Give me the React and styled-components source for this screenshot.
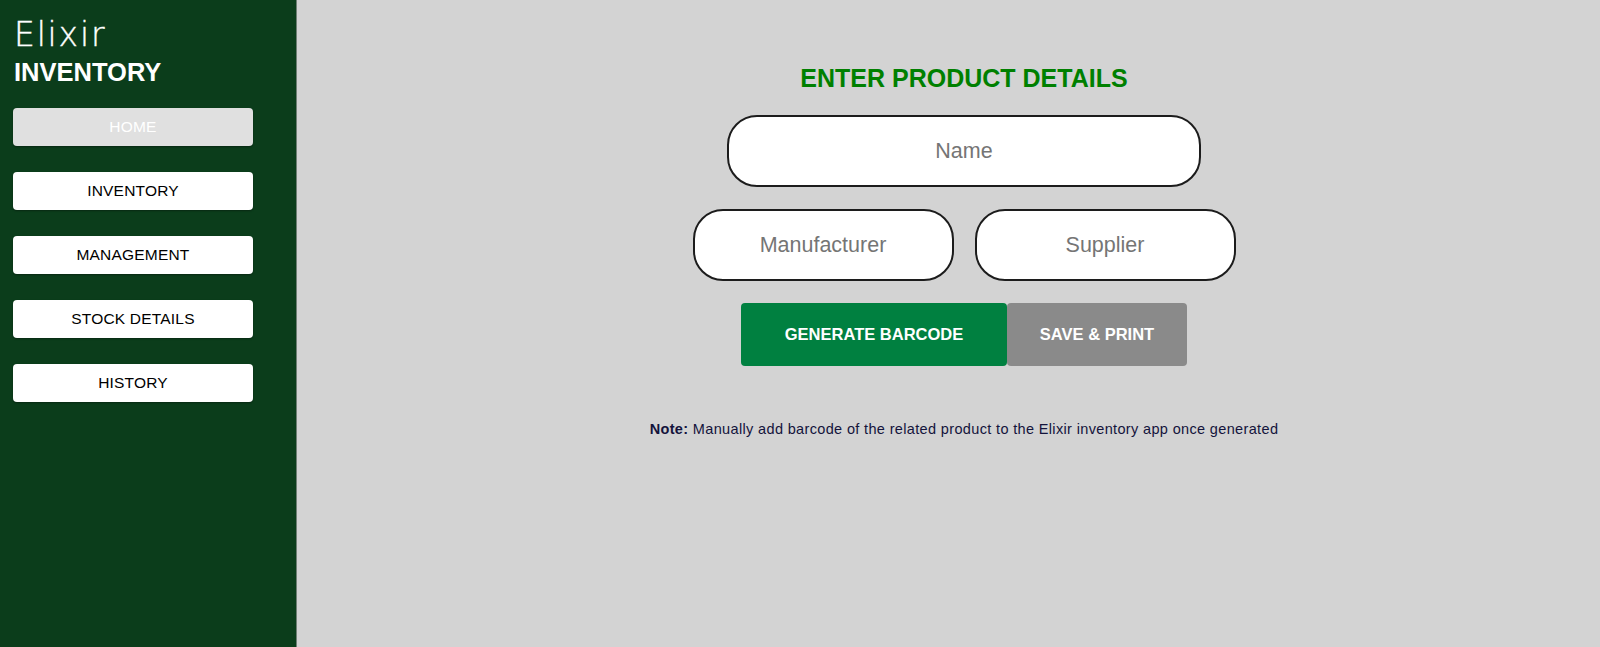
import React, { useState } from 'react';
import styled, { createGlobalStyle } from 'styled-components';

const GlobalStyle = createGlobalStyle`
    body {
        margin: 0;
        font-family: "Liberation Sans", Arial, sans-serif;
        background: #d3d3d3;
    }
`;

const Layout = styled.div`
    display: flex;
    height: 100vh;
`;

const Sidebar = styled.aside`
    width: 297px;
    flex-shrink: 0;
    box-sizing: border-box;
    padding: 0 13px;
    background: #0b3d1b;
    border-right: 1px solid #6f7f74;
    display: flex;
    flex-direction: column;
`;

const Logo = styled.div`
    margin-top: 15px;
    padding-left: 1px;
    font-family: "DejaVu Sans", sans-serif;
    font-weight: 300;
    font-size: 33px;
    line-height: 40px;
    letter-spacing: 1.8px;
    color: #fff;
    -webkit-text-stroke: 0.4px #fff;
`;

const LogoSub = styled.div`
    margin-top: 3px;
    padding-left: 1px;
    font-size: 25.5px;
    font-weight: bold;
    line-height: 29px;
    color: #fff;
`;

const Nav = styled.nav`
    margin-top: 21px;
    display: flex;
    flex-direction: column;
    gap: 26px;
`;

const NavButton = styled.button`
    width: 240px;
    height: 38px;
    border: none;
    border-radius: 4px;
    background: ${p => (p.$active ? '#e0e0e0' : '#fff')};
    color: ${p => (p.$active ? '#fff' : '#000')};
    font-family: "Liberation Sans", Arial, sans-serif;
    font-size: 15.5px;
    letter-spacing: 0.2px;
    box-shadow: 0 1px 2px rgba(0, 0, 0, 0.35);
    cursor: pointer;
`;

const Main = styled.main`
    flex: 1;
    padding-left: 31px;
    display: flex;
    flex-direction: column;
    align-items: center;
`;

const Title = styled.h1`
    margin: 64px 0 0;
    font-size: 25px;
    line-height: 28px;
    font-weight: bold;
    color: #008000;
`;

const Field = styled.input`
    box-sizing: border-box;
    width: ${p => p.$width}px;
    height: 72px;
    border: 2px solid #1c1c1c;
    border-radius: 30px;
    background: #fff;
    text-align: center;
    font-family: "Liberation Sans", Arial, sans-serif;
    font-size: 21.5px;
    color: #222;
    outline: none;

    &::placeholder {
        color: #757575;
    }
`;

const NameRow = styled.div`
    margin-top: 23px;
    display: flex;
`;

const Row = styled.div`
    margin-top: 22px;
    display: flex;
    gap: 21px;
`;

const ActionButton = styled.button`
    width: ${p => p.$width}px;
    height: 63px;
    border: none;
    border-radius: 4px;
    background: ${p => p.$bg};
    color: #fff;
    font-family: "Liberation Sans", Arial, sans-serif;
    font-size: 16.5px;
    font-weight: bold;
    cursor: pointer;
`;

const Actions = styled.div`
    margin-top: 22px;
    display: flex;
`;

const Note = styled.p`
    margin: 55px 0 0;
    font-size: 14.5px;
    line-height: 16px;
    letter-spacing: 0.35px;
    color: #14143c;

    b {
        font-weight: bold;
    }
`;

const navItems = ['HOME', 'INVENTORY', 'MANAGEMENT', 'STOCK DETAILS', 'HISTORY'];

export default function App() {
    const [active, setActive] = useState('HOME');
    const [form, setForm] = useState({ name: '', manufacturer: '', supplier: '' });

    const update = key => e => setForm({ ...form, [key]: e.target.value });

    return (
        <>
            <GlobalStyle />
            <Layout>
                <Sidebar>
                    <Logo>Elixir</Logo>
                    <LogoSub>INVENTORY</LogoSub>
                    <Nav>
                        {navItems.map(item => (
                            <NavButton key={item} $active={active === item} onClick={() => setActive(item)}>
                                {item}
                            </NavButton>
                        ))}
                    </Nav>
                </Sidebar>
                <Main>
                    <Title>ENTER PRODUCT DETAILS</Title>
                    <NameRow>
                        <Field $width={474} placeholder="Name" value={form.name} onChange={update('name')} />
                    </NameRow>
                    <Row>
                        <Field $width={261} placeholder="Manufacturer" value={form.manufacturer} onChange={update('manufacturer')} />
                        <Field $width={261} placeholder="Supplier" value={form.supplier} onChange={update('supplier')} />
                    </Row>
                    <Actions>
                        <ActionButton $width={266} $bg="#008040">GENERATE BARCODE</ActionButton>
                        <ActionButton $width={180} $bg="#8a8a8a">SAVE &amp; PRINT</ActionButton>
                    </Actions>
                    <Note>
                        <b>Note:</b> Manually add barcode of the related product to the Elixir inventory app once generated
                    </Note>
                </Main>
            </Layout>
        </>
    );
}
